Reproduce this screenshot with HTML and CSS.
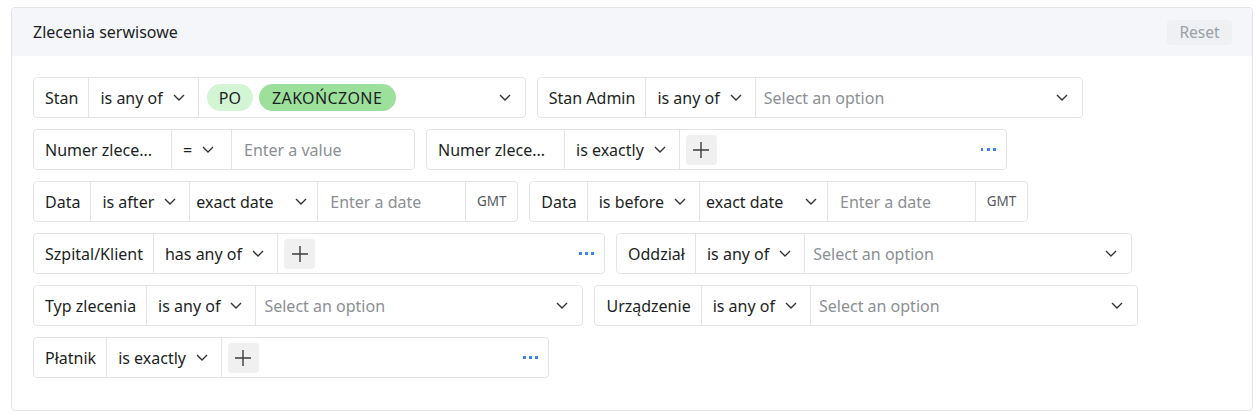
FILE: index.html
```html
<!DOCTYPE html>
<html lang="pl">
<head>
<meta charset="utf-8">
<title>Zlecenia serwisowe</title>
<link rel="stylesheet" href="styles.css">
</head>
<body>
<section class="card">
  <header class="card-head">
    <h2 class="card-title">Zlecenia serwisowe</h2>
    <button class="reset-btn" type="button">Reset</button>
  </header>
  <div class="card-body">
    <div class="filter-row">
      <div class="filter">
        <div class="cell label">Stan</div>
        <div class="cell op">is any of <svg class="chev" viewBox="0 0 12 7"><path d="M1 1l5 5 5-5"/></svg></div>
        <div class="cell value select">
          <span class="chips"><span class="chip chip-light">PO</span><span class="chip chip-dark">ZAKOŃCZONE</span></span>
          <svg class="chev" viewBox="0 0 12 7"><path d="M1 1l5 5 5-5"/></svg>
        </div>
      </div>
      <div class="filter">
        <div class="cell label">Stan Admin</div>
        <div class="cell op">is any of <svg class="chev" viewBox="0 0 12 7"><path d="M1 1l5 5 5-5"/></svg></div>
        <div class="cell value select"><span class="placeholder">Select an option</span><svg class="chev" viewBox="0 0 12 7"><path d="M1 1l5 5 5-5"/></svg></div>
      </div>
    </div>

    <div class="filter-row">
      <div class="filter">
        <div class="cell label label-trunc">Numer zlece...</div>
        <div class="cell op op-eq">= <svg class="chev" viewBox="0 0 12 7"><path d="M1 1l5 5 5-5"/></svg></div>
        <div class="cell text-input"><span class="placeholder">Enter a value</span></div>
      </div>
      <div class="filter">
        <div class="cell label label-trunc">Numer zlece...</div>
        <div class="cell op">is exactly <svg class="chev" viewBox="0 0 12 7"><path d="M1 1l5 5 5-5"/></svg></div>
        <div class="cell value multi">
          <span class="plus-btn"><svg viewBox="0 0 18 18"><path d="M9 1v16M1 9h16"/></svg></span>
          <span class="dots"><i></i><i></i><i></i></span>
        </div>
      </div>
    </div>

    <div class="filter-row">
      <div class="filter">
        <div class="cell label">Data</div>
        <div class="cell op">is after <svg class="chev" viewBox="0 0 12 7"><path d="M1 1l5 5 5-5"/></svg></div>
        <div class="cell date-mode">exact date <svg class="chev" viewBox="0 0 12 7"><path d="M1 1l5 5 5-5"/></svg></div>
        <div class="cell date-input"><span class="placeholder">Enter a date</span></div>
        <div class="cell tz">GMT</div>
      </div>
      <div class="filter">
        <div class="cell label">Data</div>
        <div class="cell op">is before <svg class="chev" viewBox="0 0 12 7"><path d="M1 1l5 5 5-5"/></svg></div>
        <div class="cell date-mode">exact date <svg class="chev" viewBox="0 0 12 7"><path d="M1 1l5 5 5-5"/></svg></div>
        <div class="cell date-input"><span class="placeholder">Enter a date</span></div>
        <div class="cell tz">GMT</div>
      </div>
    </div>

    <div class="filter-row">
      <div class="filter">
        <div class="cell label">Szpital/Klient</div>
        <div class="cell op">has any of <svg class="chev" viewBox="0 0 12 7"><path d="M1 1l5 5 5-5"/></svg></div>
        <div class="cell value multi">
          <span class="plus-btn"><svg viewBox="0 0 18 18"><path d="M9 1v16M1 9h16"/></svg></span>
          <span class="dots"><i></i><i></i><i></i></span>
        </div>
      </div>
      <div class="filter">
        <div class="cell label">Oddział</div>
        <div class="cell op">is any of <svg class="chev" viewBox="0 0 12 7"><path d="M1 1l5 5 5-5"/></svg></div>
        <div class="cell value select"><span class="placeholder">Select an option</span><svg class="chev" viewBox="0 0 12 7"><path d="M1 1l5 5 5-5"/></svg></div>
      </div>
    </div>

    <div class="filter-row">
      <div class="filter">
        <div class="cell label">Typ zlecenia</div>
        <div class="cell op">is any of <svg class="chev" viewBox="0 0 12 7"><path d="M1 1l5 5 5-5"/></svg></div>
        <div class="cell value select"><span class="placeholder">Select an option</span><svg class="chev" viewBox="0 0 12 7"><path d="M1 1l5 5 5-5"/></svg></div>
      </div>
      <div class="filter">
        <div class="cell label">Urządzenie</div>
        <div class="cell op">is any of <svg class="chev" viewBox="0 0 12 7"><path d="M1 1l5 5 5-5"/></svg></div>
        <div class="cell value select"><span class="placeholder">Select an option</span><svg class="chev" viewBox="0 0 12 7"><path d="M1 1l5 5 5-5"/></svg></div>
      </div>
    </div>

    <div class="filter-row">
      <div class="filter">
        <div class="cell label">Płatnik</div>
        <div class="cell op">is exactly <svg class="chev" viewBox="0 0 12 7"><path d="M1 1l5 5 5-5"/></svg></div>
        <div class="cell value multi">
          <span class="plus-btn"><svg viewBox="0 0 18 18"><path d="M9 1v16M1 9h16"/></svg></span>
          <span class="dots"><i></i><i></i><i></i></span>
        </div>
      </div>
    </div>
  </div>
</section>
</body>
</html>
```

FILE: styles.css
```css
* { box-sizing: border-box; }

html, body {
  margin: 0;
  padding: 0;
  background: #ffffff;
}

body {
  font-family: "Noto Sans", "Open Sans", "Liberation Sans", sans-serif;
  font-size: 16px;
  color: #1c1f23;
  padding: 7px 8px 0 11px;
}

.card {
  width: 1242px;
  height: 404px;
  border: 1px solid #e3e4e8;
  border-radius: 4px;
  overflow: hidden;
}

.card-head {
  height: 48px;
  background: #f5f6fa;
  display: flex;
  align-items: center;
  justify-content: space-between;
  padding: 0 20px 0 21px;
}

.card-title {
  margin: 0;
  font-size: 16px;
  font-weight: 400;
  color: #1c1f23;
}

.reset-btn {
  font-family: inherit;
  font-size: 15.5px;
  color: #9aa0a6;
  background: #eef0f3;
  border: none;
  border-radius: 4px;
  width: 65px;
  height: 25px;
  padding: 0;
}

.card-body {
  padding: 21px 21px;
  display: flex;
  flex-direction: column;
  gap: 11px;
}

.filter-row {
  display: flex;
  gap: 11px;
}

.filter {
  display: flex;
  height: 41px;
  border: 1px solid #e3e4e8;
  border-radius: 4px;
  background: #fff;
}

.cell {
  display: flex;
  align-items: center;
  padding: 0 10px;
  white-space: nowrap;
  border-left: 1px solid #e3e4e8;
  line-height: 1;
}

.cell:first-child { border-left: none; }

.label { padding: 0 10px 0 11px; }
.label-trunc { width: 137px; }

.op { gap: 10px; padding: 0 13px 0 11px; }
.op-eq { width: 60px; }

.chev {
  width: 12px;
  height: 7px;
  fill: none;
  stroke: #333;
  stroke-width: 1.4;
  flex: none;
}

.value {
  width: 327px;
  justify-content: space-between;
}

.select { padding: 0 14px 0 8px; }

.placeholder { color: #8b8f94; }

.chips { display: flex; gap: 6px; }

.chip {
  display: inline-flex;
  align-items: center;
  height: 27px;
  padding: 0 12px;
  border-radius: 14px;
  color: #1c1f23;
  font-size: 16px;
}

.chip-light { background: #d3f5d4; }
.chip-dark { background: #9de09c; padding: 0 14px 0 13px; letter-spacing: 0.4px; }

.text-input { width: 183px; padding: 0 12px; }

.multi { padding: 0 10px 0 6px; }

.plus-btn {
  width: 31px;
  height: 30px;
  border-radius: 4px;
  background: #f0f0f1;
  display: flex;
  align-items: center;
  justify-content: center;
}

.plus-btn svg {
  width: 18px;
  height: 18px;
  fill: none;
  stroke: #3c3c3c;
  stroke-width: 1.4;
}

.dots { display: flex; gap: 3.5px; }
.dots i {
  display: block;
  width: 2.7px;
  height: 2.7px;
  background: #3b82f6;
}

.date-mode { width: 128px; justify-content: space-between; padding: 0 10px 0 6px; }
.date-input { width: 148px; padding: 0 12px; }
.tz { width: 52px; justify-content: center; font-size: 13.5px; color: #555a60; }
```
